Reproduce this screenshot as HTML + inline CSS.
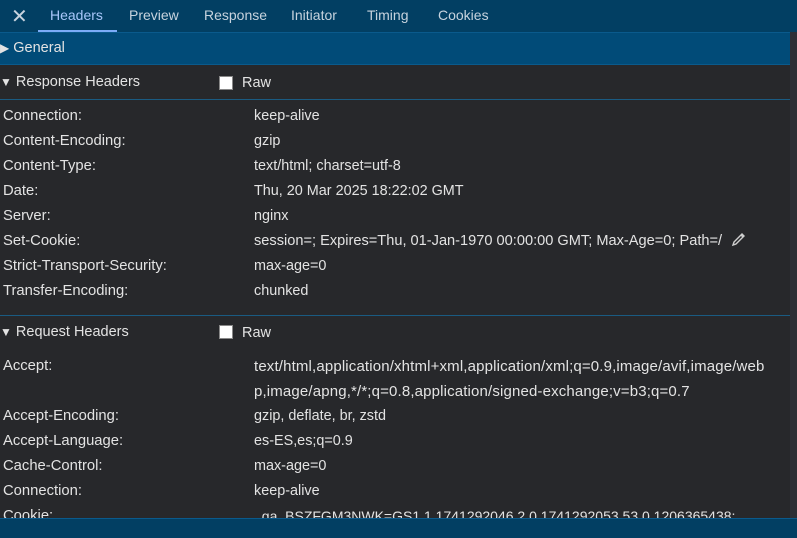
<!DOCTYPE html><html><head><style>
body{margin:0;width:797px;height:537px;overflow:hidden;background:#27282b;font-family:"Liberation Sans",sans-serif;font-size:14px;color:#e3e3e3;position:relative}
.a{position:absolute;white-space:nowrap}
.tab{position:absolute;top:7px;color:#c7d3de}
.r{position:absolute;left:3px;height:25px;line-height:25px;white-space:nowrap;font-size:14.8px;margin-top:2px}
.v{position:absolute;left:254px;height:25px;line-height:25px;white-space:nowrap;font-size:14.4px;margin-top:2px}
.w{font-size:15px;letter-spacing:0.15px}
.cb{position:absolute;width:12px;height:12px;background:#fff;border:1px solid #888}
.t{font-size:12px}
</style></head><body>
<div class="a" style="left:0;top:0;width:797px;height:32px;background:#023f63"></div>
<div class="a" style="left:38px;top:30px;width:79px;height:2px;background:#7cacf8"></div>
<div class="a" style="left:11px;top:4px;font-size:20px;color:#c7d3de">✕</div>
<div class="tab" style="left:50px;color:#a8c7fa">Headers</div>
<div class="tab" style="left:129px">Preview</div>
<div class="tab" style="left:204px">Response</div>
<div class="tab" style="left:291px">Initiator</div>
<div class="tab" style="left:367px">Timing</div>
<div class="tab" style="left:438px">Cookies</div>
<div class="a" style="left:0;top:32px;width:790px;height:33px;background:#014b78;border-top:1px solid #0a5a8c;border-bottom:1px solid #0a5a8c;box-sizing:border-box"></div>
<div class="a" style="left:0;top:40px;color:#e3e3e3;font-size:14.5px"><span class="t">▶</span> General</div>
<div class="a" style="left:790px;top:32px;width:7px;height:486px;background:#2d2f36"></div>
<div class="a" style="left:0;top:74px;font-size:14.5px"><span class="t">▼</span> Response Headers</div>
<div class="cb" style="left:219px;top:76px"></div><div class="a" style="left:242px;top:75px;font-size:14.5px">Raw</div>
<div class="a" style="left:0;top:99px;width:790px;height:1px;background:#1a5b82"></div>
<div class="r" style="top:102px">Connection:</div><div class="v" style="top:102px">keep-alive</div>
<div class="r" style="top:127px">Content-Encoding:</div><div class="v" style="top:127px">gzip</div>
<div class="r" style="top:152px">Content-Type:</div><div class="v" style="top:152px">text/html; charset=utf-8</div>
<div class="r" style="top:177px">Date:</div><div class="v" style="top:177px">Thu, 20 Mar 2025 18:22:02 GMT</div>
<div class="r" style="top:202px">Server:</div><div class="v" style="top:202px">nginx</div>
<div class="r" style="top:227px">Set-Cookie:</div><div class="v" style="top:227px;font-size:14.6px">session=; Expires=Thu, 01-Jan-1970 00:00:00 GMT; Max-Age=0; Path=/</div>
<svg class="a" style="left:731px;top:232px" width="15" height="15" viewBox="0 0 15 15"><path d="M2 13 L3 10 L11 2 L13 4 L5 12 Z M10 3 L12 5" fill="none" stroke="#cfcfcf" stroke-width="1.4"/></svg>
<div class="r" style="top:252px">Strict-Transport-Security:</div><div class="v" style="top:252px">max-age=0</div>
<div class="r" style="top:277px">Transfer-Encoding:</div><div class="v" style="top:277px">chunked</div>
<div class="a" style="left:0;top:315px;width:790px;height:1px;background:#1a5b82"></div>
<div class="a" style="left:0;top:324px;font-size:14.5px"><span class="t">▼</span> Request Headers</div>
<div class="cb" style="left:219px;top:325px"></div><div class="a" style="left:242px;top:325px;font-size:14.5px">Raw</div>
<div class="r" style="top:352px">Accept:</div><div class="v w" style="top:352px">text/html,application/xhtml+xml,application/xml;q=0.9,image/avif,image/web</div>
<div class="v w" style="top:377px">p,image/apng,*/*;q=0.8,application/signed-exchange;v=b3;q=0.7</div>
<div class="r" style="top:402px">Accept-Encoding:</div><div class="v" style="top:402px">gzip, deflate, br, zstd</div>
<div class="r" style="top:427px">Accept-Language:</div><div class="v" style="top:427px">es-ES,es;q=0.9</div>
<div class="r" style="top:452px">Cache-Control:</div><div class="v" style="top:452px">max-age=0</div>
<div class="r" style="top:477px">Connection:</div><div class="v" style="top:477px">keep-alive</div>
<div class="r" style="top:502px">Cookie:</div><div class="v" style="top:502px;font-size:14px">_ga_BSZFGM3NWK=GS1.1.1741292046.2.0.1741292053.53.0.1206365438;</div>
<div class="a" style="left:0;top:518px;width:797px;height:19px;background:#023f63;border-top:1px solid #0a5a8c"></div>
</body></html>
